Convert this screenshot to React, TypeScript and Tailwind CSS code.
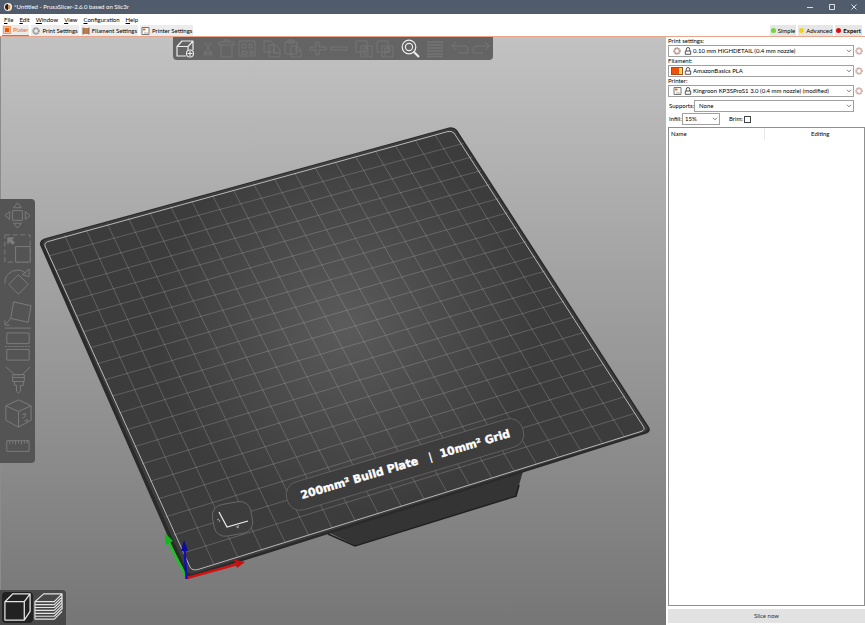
import React from "react";

type Point = [number, number];

/* Corners of the printable area: back left, back right, front right, front left. */
const BED: Point[] = [
  [43, 241],
  [455, 130],
  [646, 430],
  [190, 572],
];

const CELLS = 20;

/* Maps a point of the unit square onto the bed as the camera sees it. */
function project(u: number, v: number): Point {
  const [[x0, y0], [x1, y1], [x2, y2], [x3, y3]] = BED;
  const dx1 = x1 - x2;
  const dx2 = x3 - x2;
  const sx = x0 - x1 + x2 - x3;
  const dy1 = y1 - y2;
  const dy2 = y3 - y2;
  const sy = y0 - y1 + y2 - y3;
  const det = dx1 * dy2 - dx2 * dy1;
  const g = (sx * dy2 - dx2 * sy) / det;
  const h = (dx1 * sy - sx * dy1) / det;
  const w = g * u + h * v + 1;
  return [
    ((x1 - x0 + g * x1) * u + (x3 - x0 + h * x3) * v + x0) / w,
    ((y1 - y0 + g * y1) * u + (y3 - y0 + h * y3) * v + y0) / w,
  ];
}

function gridPath() {
  let d = "";
  for (let i = 1; i < CELLS; i++) {
    const t = i / CELLS;
    const lines: [Point, Point][] = [
      [project(t, 0), project(t, 1)],
      [project(0, t), project(1, t)],
    ];
    for (const [a, b] of lines) {
      d += `M${a[0].toFixed(2)} ${a[1].toFixed(2)}L${b[0].toFixed(2)} ${b[1].toFixed(2)}`;
    }
  }
  return d;
}

function Scene() {
  return (
    <svg
      className="absolute inset-0 size-full"
      viewBox="0 37 666 588"
      preserveAspectRatio="xMidYMid meet"
      role="img"
      aria-label="Print bed"
    >
      <defs>
        <radialGradient id="bedLight" gradientUnits="userSpaceOnUse" cx="345" cy="325" r="190">
          <stop offset="0" stopColor="#5b5b5b" />
          <stop offset="0.5" stopColor="#4b4b4b" />
          <stop offset="1" stopColor="#3c3c3c" />
        </radialGradient>
      </defs>

      <path d="M326 531L355 545.500L516 495.500L524 468L500 450Z" fill="#343434" />
      <path d="M328 534L355 546L516 496L519 485" fill="none" stroke="#1f1f1f" strokeWidth="1.600" />

      <path
        d="M46 238L449 127.500Q454 126.500 457 130L649 427Q652 432 645 434L195 576Q187 579 184 573L40 245Q39 240 46 238Z"
        fill="#2a2a2a"
      />
      <path
        d="M48 238.500L449 128.500Q453 128 455 130L647 427Q649 430.500 644 432L196 573Q189 575 187 571L43 244Q42 240 48 238.500Z"
        fill="url(#bedLight)"
      />
      <path d={gridPath()} stroke="#a8a8a8" strokeOpacity="0.480" strokeWidth="0.700" fill="none" />

      <rect
        x="282"
        y="450"
        width="246"
        height="29"
        rx="13"
        transform="rotate(-16.600 405 464.500)"
        fill="#3d3d3d"
        stroke="#6b6b6b"
        strokeWidth="0.700"
      />
      <rect
        x="213"
        y="503"
        width="39"
        height="32"
        rx="11"
        transform="rotate(-10 232 519)"
        fill="#3d3d3d"
        stroke="#777"
        strokeWidth="0.700"
      />
      <path d="M219 512L227 527L248 521" fill="none" stroke="#ededed" strokeWidth="1.200" />
      <path d="M217 520l2-1M219 522l1-2M236 526l3 2M239 525l-2 3" stroke="#ccc" strokeWidth="0.700" />

      <path
        d="M50 241L448 131.500Q452 131 454 133L643 426Q646 430 641 431.500L198 569.500Q192 571 190 567L45 246Q44 242 50 241Z"
        fill="none"
        stroke="#b8b8b8"
        strokeWidth="1"
      />

      <g
        transform="translate(302 499) rotate(-16.600)"
        className="fill-white stroke-white font-['DejaVu_Sans',sans-serif] text-[11px] font-bold"
        strokeWidth="0.400"
      >
        <text x="0" y="0">200mm² Build Plate</text>
        <text x="133" y="0" strokeWidth="0">|</text>
        <text x="145" y="0">10mm² Grid</text>
      </g>

      <path d="M187 578L168 541" stroke="#14c61e" strokeWidth="2.400" />
      <path d="M165 533L173 541L166 545Z" fill="#10b81a" />
      <path d="M187 578L236 564.500" stroke="#d01212" strokeWidth="2.400" />
      <path d="M234 559.500L245 562L237 568Z" fill="#c80e0e" />
      <path d="M186.500 579L184.500 549" stroke="#1010b4" strokeWidth="2.400" />
      <path d="M184 540L188 551H181Z" fill="#0c0ca0" />
    </svg>
  );
}

function Glyph({ children, box = 20, className }: { children: React.ReactNode; box?: number; className: string }) {
  return (
    <svg viewBox={`0 0 ${box} ${box}`} className={className} fill="none" stroke="currentColor" strokeLinejoin="round" aria-hidden="true">
      {children}
    </svg>
  );
}

const TOP_TOOLS: { name: string; on?: boolean; group?: boolean; art: React.ReactNode }[] = [
  {
    name: "Add",
    on: true,
    art: (
      <>
        <path d="M11 17H2V7.500H13V11M2 7.500L7 2H18L13 7.500M18 2V11" strokeWidth="1.200" />
        <circle cx="15" cy="14.500" r="3.500" strokeWidth="1.100" />
        <path d="M15 12v5M12.500 14.500h5" strokeWidth="1.100" />
      </>
    ),
  },
  {
    name: "Delete",
    art: <path d="M10 3L16 15M16 3L10 15M9 16h3v-3h-3zM14 16h3v-3h-3z" />,
  },
  {
    name: "Delete all",
    art: <path d="M3 3h15v3H3zM5 6v12h11V6M8 3V1h5v2" />,
  },
  {
    name: "Arrange",
    group: true,
    art: <path d="M2 2h16v15H2zM5 5h4v4H5zM12 5h3v4h-3zM5 12h5v3H5zM13 12h3v3h-3z" />,
  },
  { name: "Copy", art: <path d="M2 2h7l3 3v8H2zM7 6h6l5 4v8H7zM12 10v4h5" /> },
  {
    name: "Paste",
    group: true,
    art: <path d="M2 3h12v12H2zM5 1h6v3H5zM8 7h6l4 4v7H8zM13 8v4h5" />,
  },
  { name: "Add instance", art: <path d="M2 8h6V3h3v5h7v3h-7v5H8v-5H2z" /> },
  { name: "Remove instance", group: true, art: <path d="M2 8h16v3H2z" /> },
  { name: "Split to objects", art: <path d="M2 2h11v11H2zM7 7h11v11H7zM10 9h4v7h-4z" /> },
  {
    name: "Split to parts",
    group: true,
    art: <path d="M2 2h11v11H2zM7 7h11v11H7zM10 9h5v4h-5zM10 13v4" />,
  },
  {
    name: "Search",
    on: true,
    group: true,
    art: (
      <>
        <circle cx="9" cy="8" r="6.800" strokeWidth="1.200" />
        <circle cx="9" cy="8" r="3.600" strokeWidth="1.200" />
        <path d="M13.500 12.500L19 18" strokeWidth="2.200" />
      </>
    ),
  },
  {
    name: "Variable layer height",
    group: true,
    art: <path d="M2 3h16M2 6h16M2 9h16M2 12h16M2 15h16M2 17.500h16" strokeWidth="1.400" />,
  },
  { name: "Undo", art: <path d="M6 3L2 7L6 11M2 7h13q3 0 3 4v3H8" /> },
  { name: "Redo", art: <path d="M14 3L18 7L14 11M18 7H5q-3 0-3 4v3h10" /> },
];

function TopToolbar() {
  return (
    <div className="absolute top-0 left-[173px] flex h-[23px] items-center rounded-b-sm bg-[#646464] px-0.5">
      {TOP_TOOLS.map((tool, i) => (
        <button
          key={tool.name}
          type="button"
          aria-label={tool.name}
          className={
            (i > 1 && i < TOP_TOOLS.length - 1 && tool.group ? "mr-[5px] " : i > 0 && i < 13 ? "mr-px " : "") +
            (tool.on ? "text-[#ececec]" : "text-[#747474]")
          }
        >
          <Glyph className="size-5">{tool.art}</Glyph>
        </button>
      ))}
    </div>
  );
}

const SIDE_TOOLS: { name: string; art: React.ReactNode }[] = [
  {
    name: "Move",
    art: <path d="M12 12h10v10H12zM17 4l4 5h-8zM17 30l4-5h-8zM4 17l5-4v8zM30 17l-5-4v8z" />,
  },
  {
    name: "Scale",
    art: (
      <>
        <path d="M4 3h26v28H4z" strokeDasharray="5 3" />
        <path d="M15 15h15v16H15z" fill="#545454" />
        <path d="M7 6h6l-2 2 3 3-2 2-3-3-2 2z" fill="currentColor" />
      </>
    ),
  },
  {
    name: "Rotate",
    art: <path d="M18 10l10 10-10 10L8 20zM4 19a13 13 0 0 1 22-10M29 4v8l-7-2z" />,
  },
  { name: "Place on face", art: <path d="M13 4l18 4-3 17-18-4zM4 31h27M10 21l-5 6M4 23v5h5" /> },
  {
    name: "Cut",
    art: (
      <>
        <path d="M6 2h23v11H6zM6 19h23v11H6z" />
        <path d="M4 16h27" strokeDasharray="2 1" />
      </>
    ),
  },
  {
    name: "Paint supports",
    art: <path d="M5 3l9 8h8l8-8M12 11h12v7H12zM12 14h12M14 18v4h2v6l2 2 2-2v-6h3v-4" />,
  },
  {
    name: "Seam painting",
    art: <path d="M5 9l13-6 13 6v15l-13 7-13-7zM5 9l13 6 13-6M18 15v16M22 18l3-1v3l-3 2M24 25l3-2v3" />,
  },
  { name: "Measure", art: <path d="M6 11h23v11H6zM9 11v4M12 11v3M15 11v4M18 11v3M21 11v4M24 11v3M27 11v3" /> },
];

function SideToolbar() {
  return (
    <div className="absolute top-[162px] left-0 flex flex-col rounded-r-sm bg-[#545454]">
      {SIDE_TOOLS.map((tool) => (
        <button key={tool.name} type="button" aria-label={tool.name} className="px-px text-[#7c7c7c]">
          <Glyph box={34} className="size-[33px]">
            {tool.art}
          </Glyph>
        </button>
      ))}
    </div>
  );
}

function ViewSwitch() {
  return (
    <div className="absolute bottom-0 left-0 flex h-[35px] items-center rounded-tr-sm bg-[#484848] px-0.5">
      <button type="button" aria-label="3D editor view" className="rounded-sm bg-[#222] text-[#e4e4e4]">
        <Glyph box={32} className="size-[31px]">
          <path d="M3 10h20v19H3zM3 10l8-8h18l-6 8M29 2v18l-6 9" strokeWidth="1.300" />
        </Glyph>
      </button>
      <button type="button" aria-label="Preview" className="text-[#e4e4e4]">
        <Glyph box={32} className="size-[31px]">
          <path
            d="M2 10h20l8-8H11zM2 13h20l8-8M2 16h20l8-8M2 19h20l8-8M2 22h20l8-8M2 25h20l8-8M2 28h20l8-8M30 2v16M2 10v18"
            strokeWidth="1.200"
          />
        </Glyph>
      </button>
    </div>
  );
}

function Cog({ className }: { className: string }) {
  return (
    <svg viewBox="0 0 10 10" className={className} fill="none" stroke="currentColor" aria-hidden="true">
      <circle cx="5" cy="5" r="3.800" strokeWidth="1.600" strokeDasharray="1.700 0.690" />
      <circle cx="5" cy="5" r="2.900" strokeWidth="0.900" />
    </svg>
  );
}

function Lock() {
  return (
    <svg viewBox="0 0 8 8" className="size-2" fill="none" stroke="#555" aria-hidden="true">
      <path d="M2.300 4V2.200a1.700 1.700 0 0 1 3.400 0V4M1.300 4h5.400v3.300H1.300z" />
    </svg>
  );
}

function PrinterIcon() {
  return (
    <svg viewBox="0 0 9 8" className="h-2 w-[9px]" aria-hidden="true">
      <path d="M1 .5h7v7H1z" fill="#fff" stroke="#777" />
      <path d="M2 1.500h2.500v2H2z" fill="#ed6b21" />
      <path d="M3 6h4" stroke="#aaa" />
    </svg>
  );
}

function Chevron() {
  return (
    <svg
      viewBox="0 0 6 4"
      className="pointer-events-none absolute top-1/2 right-[2px] h-1 w-1.5 -translate-y-1/2"
      fill="none"
      stroke="#555"
      aria-hidden="true"
    >
      <path d="M1 .8L3 2.800L5 .8" strokeWidth="0.800" />
    </svg>
  );
}

const FIELD = "block h-3 w-full appearance-none border border-[#a0a0a0] bg-white leading-[10px] outline-none ";

function Preset({ id, label, value, icon }: { id: string; label: string; value: string; icon: React.ReactNode }) {
  return (
    <div className="flex flex-col">
      <label htmlFor={id} className="h-2 leading-[8px]">
        {label}
      </label>
      <div className="flex items-center gap-px pr-0.5">
        <div className="relative min-w-0 flex-1">
          <select id={id} className={FIELD + "pl-6"}>
            <option>{value}</option>
          </select>
          <span className="pointer-events-none absolute inset-y-0 left-[3px] flex items-center gap-px">
            <span className="flex w-3 justify-center">{icon}</span>
            <Lock />
          </span>
          <Chevron />
        </div>
        <button type="button" aria-label={`Edit ${label}`}>
          <Cog className="size-2 text-[#c59a94]" />
        </button>
      </div>
    </div>
  );
}

function Sidebar() {
  return (
    <aside className="flex w-[199px] shrink-0 flex-col bg-white pl-0.5">
      <Preset
        id="print"
        label="Print settings:"
        value="0.10 mm HIGHDETAIL (0.4 mm nozzle)"
        icon={<Cog className="size-2 text-[#a8827c]" />}
      />
      <Preset
        id="filament"
        label="Filament:"
        value="AmazonBasics PLA"
        icon={
          <span className="flex h-2 w-3 border border-[#a05020] bg-[#ffe14d]">
            <span className="w-[7px] bg-[#f2500c]" />
          </span>
        }
      />
      <Preset
        id="printer"
        label="Printer:"
        value="Kingroon KP3SProS1 3.0 (0.4 mm nozzle) (modified)"
        icon={<PrinterIcon />}
      />
      <div className="mt-[3px] flex items-center pr-[11px]">
        <label htmlFor="supports" className="w-[26px] pl-px">
          Supports:
        </label>
        <div className="relative flex-1">
          <select id="supports" className={FIELD + "pl-1"}>
            <option>None</option>
          </select>
          <Chevron />
        </div>
      </div>
      <div className="mt-px flex items-center">
        <label htmlFor="infill" className="w-[14px] pl-px">
          Infill:
        </label>
        <div className="relative w-[38px]">
          <select id="infill" className={FIELD + "pl-0.5"}>
            <option>15%</option>
          </select>
          <Chevron />
        </div>
        <label htmlFor="brim" className="ml-[9px]">
          Brim:
        </label>
        <input id="brim" type="checkbox" className="ml-px size-[7px] appearance-none border border-[#444] bg-white" />
      </div>
      <div className="mt-0.5 flex-1 border border-[#8f8f8f] bg-white">
        <table className="w-full table-fixed text-left">
          <thead>
            <tr>
              <th scope="col" className="h-3 w-[95px] border-r border-[#e8e8e8] pl-0.5 font-normal">
                Name
              </th>
              <th scope="col" className="h-3 pl-3 text-center font-normal">
                Editing
              </th>
            </tr>
          </thead>
        </table>
      </div>
      <button type="button" className="mt-[3px] mb-0.5 h-3.5 bg-[#e2e2e2] text-[#333]">
        Slice now
      </button>
    </aside>
  );
}

const MENUS = ["File", "Edit", "Window", "View", "Configuration", "Help"];

const TABS: { label: string; icon: React.ReactNode }[] = [
  {
    label: "Plater",
    icon: (
      <svg viewBox="0 0 8 8" className="size-2" aria-hidden="true">
        <path d="M.5 .5h7v7h-7z" fill="#f7c9ae" stroke="#ed9a6b" />
        <path d="M2 2h4v4H2z" fill="#e8590c" />
      </svg>
    ),
  },
  { label: "Print Settings", icon: <Cog className="size-2 text-[#8a8a8a]" /> },
  {
    label: "Filament Settings",
    icon: (
      <svg viewBox="0 0 8 8" className="size-2" aria-hidden="true">
        <path d="M1 1h6v6H1z" fill="#c27a45" />
        <path d="M1 .5v7M7 .5v7" stroke="#6e6e6e" />
      </svg>
    ),
  },
  { label: "Printer Settings", icon: <PrinterIcon /> },
];

const MODES = [
  { label: "Simple", dot: "bg-[#6fd63c]", text: "" },
  { label: "Advanced", dot: "bg-[#f2d21b]", text: "" },
  { label: "Expert", dot: "bg-[#d80f16]", text: "font-bold" },
];

export default function App() {
  return (
    <div className="flex h-screen flex-col overflow-hidden bg-white font-['Lato','Open_Sans',sans-serif] text-[6px] leading-[8px] text-black">
      <header className="flex h-3.5 shrink-0 items-center bg-[#505b6b] pl-1 text-white">
        <svg viewBox="0 0 8 8" className="size-2" aria-hidden="true">
          <circle cx="4" cy="4" r="4" fill="#f4f4f4" />
          <path d="M4 1a3 3 0 0 0 0 6z" fill="#222" />
          <path d="M4 1.500a2.500 2.500 0 0 1 0 5z" fill="#e58a3a" />
        </svg>
        <h1 className="ml-0.5 flex-1">*Untitled - PrusaSlicer-2.6.0 based on Slic3r</h1>
        <div className="flex items-center gap-4 pr-2">
          <button type="button" aria-label="Minimize">
            <Glyph box={6} className="size-1.5">
              <path d="M0 3.500h6" strokeWidth="0.800" />
            </Glyph>
          </button>
          <button type="button" aria-label="Maximize">
            <Glyph box={6} className="size-1.5">
              <path d="M.5 .5h5v5h-5z" strokeWidth="0.800" />
            </Glyph>
          </button>
          <button type="button" aria-label="Close">
            <Glyph box={6} className="size-1.5">
              <path d="M.5 .5l5 5M5.500 .5l-5 5" strokeWidth="0.800" />
            </Glyph>
          </button>
        </div>
      </header>

      <nav className="flex h-[11px] shrink-0 items-center gap-1.5 pl-1" aria-label="Menu">
        {MENUS.map((menu) => (
          <button key={menu} type="button">
            <span className="underline">{menu[0]}</span>
            {menu.slice(1)}
          </button>
        ))}
      </nav>

      <div className="flex h-3 shrink-0 items-stretch gap-0.5 border-b border-[#e8a58a] pl-0.5">
        {TABS.map((tab, i) => (
          <button
            key={tab.label}
            type="button"
            className={
              "flex items-center gap-0.5 bg-[#ececec] px-px " +
              (i === 0 ? "border-b border-[#ed6b21] text-[#ed6b21]" : "")
            }
          >
            {tab.icon}
            {tab.label}
          </button>
        ))}
        <div className="ml-auto flex gap-0.5 pr-[3px]">
          {MODES.map((mode) => (
            <button key={mode.label} type="button" className={"flex items-center gap-0.5 bg-[#e6e6e6] px-px " + mode.text}>
              <span className={"size-[5px] rounded-full " + mode.dot} />
              {mode.label}
            </button>
          ))}
        </div>
      </div>

      <div className="flex min-h-0 flex-1">
        <main className="relative min-w-0 flex-1 bg-linear-to-b from-[#c2c2c2] to-[#767676] shadow-[inset_1px_0_#8c8c8c]">
          <Scene />
          <TopToolbar />
          <SideToolbar />
          <ViewSwitch />
        </main>
        <Sidebar />
      </div>
    </div>
  );
}
